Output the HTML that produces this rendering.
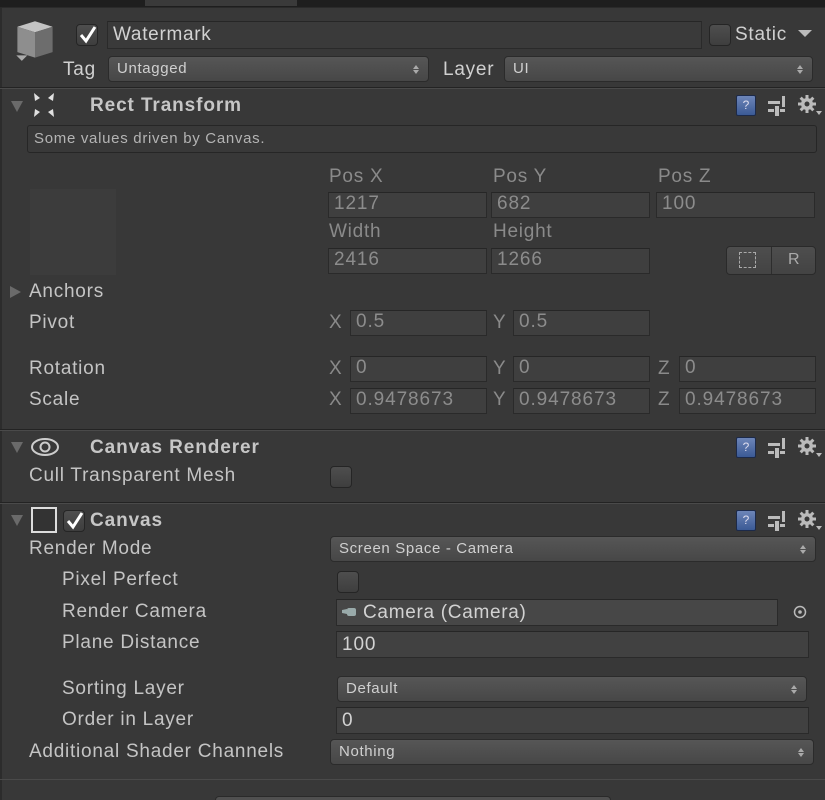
<!DOCTYPE html>
<html><head><meta charset="utf-8"><style>
*{box-sizing:border-box;margin:0;padding:0}
html,body{width:825px;height:800px;overflow:hidden}
body{background:#383838;font-family:"Liberation Sans",sans-serif;color:#c4c4c4;position:relative;font-size:19px}
.a{position:absolute}
.t{position:absolute;line-height:20px;white-space:nowrap;letter-spacing:0.75px}
.f{position:absolute;background:#3f3f3f;border:1px solid #2a2a2a;border-top-color:#262626;color:#8c8c8c;font-size:19px;line-height:22px;padding-left:5px;letter-spacing:0.9px;white-space:nowrap;overflow:hidden}
.fe{color:#d2d2d2;background:#414141}
.dd{position:absolute;background:linear-gradient(#565656,#474747);border:1px solid #2b2b2b;border-radius:4px;color:#d0d0d0;font-size:15px;line-height:24px;padding-left:8px;letter-spacing:0.65px}
.dd:after{content:"";position:absolute;right:9px;top:8px;width:0;height:0;border-left:3px solid transparent;border-right:3px solid transparent;border-bottom:4px solid #aaa}
.dd:before{content:"";position:absolute;right:9px;top:13px;width:0;height:0;border-left:3px solid transparent;border-right:3px solid transparent;border-top:4px solid #aaa}
.cb{position:absolute;width:22px;height:22px;border-radius:4px;background:linear-gradient(#4e4e4e,#3e3e3e);border:1px solid #252525}
.sep{position:absolute;left:0;width:825px;height:2px;background:#232323;border-bottom:1px solid #4a4a4a}
.h{position:absolute;font-weight:bold;font-size:19px;color:#c6c6c6;line-height:22px;letter-spacing:0.9px}
.tri{position:absolute;width:0;height:0;border-left:6px solid transparent;border-right:6px solid transparent;border-top:11px solid #6a6a6a}
.trr{position:absolute;width:0;height:0;border-top:6px solid transparent;border-bottom:6px solid transparent;border-left:11px solid #6a6a6a}
.lb{color:#8a8a8a}
</style></head><body>
<div class="a" style="left:0;top:0;width:825px;height:7px;background:#1e1e1e"></div>
<div class="a" style="left:145px;top:0;width:152px;height:6px;background:#3a3a3a"></div>
<div class="a" style="left:0;top:7px;width:825px;height:1px;background:#2a2a2a"></div>
<div class="a" style="left:0;top:8px;width:2px;height:792px;background:#2c2c2c"></div>

<svg class="a" style="left:13px;top:18px" width="44" height="44" viewBox="0 0 40 40">
<polygon points="4,8 20,3 36,8 20,13" fill="#c4c4c4"/>
<polygon points="4,8 20,13 20,36 4,31" fill="#8e8e8e"/>
<polygon points="20,13 36,8 36,31 20,36" fill="#6d6d6d"/>
<polygon points="3,34 13,34 8,39" fill="#aaa"/>
</svg>
<div class="cb" style="left:76px;top:24px"></div>
<svg class="a" style="left:78px;top:24px" width="20" height="20"><path d="M3 11 L8 17 L17 3" stroke="#fff" stroke-width="3" fill="none"/></svg>
<div class="f fe" style="left:107px;top:21px;width:595px;height:28px;font-size:19px;line-height:26px;background:#3a3a3a;letter-spacing:0.7px">Watermark</div>
<div class="cb" style="left:709px;top:24px"></div>
<div class="t" style="left:735px;top:25px;font-size:19px;color:#d0d0d0">Static</div>
<div class="a" style="left:798px;top:30px;border-left:7px solid transparent;border-right:7px solid transparent;border-top:7px solid #bbb"></div>

<div class="t" style="left:63px;top:60px;color:#d0d0d0">Tag</div>
<div class="dd" style="left:108px;top:56px;width:321px;height:26px">Untagged</div>
<div class="t" style="left:443px;top:60px;color:#d0d0d0">Layer</div>
<div class="dd" style="left:504px;top:56px;width:309px;height:26px">UI</div>

<div class="sep" style="top:87px"></div>
<div class="tri" style="left:11px;top:101px"></div>
<svg class="a" style="left:30px;top:92px" width="28" height="26" viewBox="0 0 28 26"><g fill="#e0e0e0"><polygon points="4,1 10,6 5,9"/><polygon points="24,1 18,6 23,9"/><polygon points="4,25 10,20 5,17"/><polygon points="24,25 18,20 23,17"/></g></svg>
<div class="h" style="left:90px;top:95px">Rect Transform</div>
<div class="a" style="left:736px;top:95px;width:20px;height:21px;background:linear-gradient(#6d85b8,#3b5a95);border:1px solid #1c2a4a;border-radius:2px;color:#dde;font-size:12px;text-align:center;line-height:19px">?</div>
<svg class="a" style="left:767px;top:95px" width="20" height="22"><g fill="#bbb"><rect x="1" y="6" width="12" height="3"/><rect x="15" y="1" width="3" height="11"/><rect x="1" y="14" width="6" height="3"/><rect x="8" y="11" width="4" height="10"/><rect x="13" y="14" width="5" height="3"/></g></svg>
<svg class="a" style="left:797px;top:94px" width="26" height="24"><g fill="#bbb"><circle cx="10" cy="10" r="6"/><rect x="8.5" y="1" width="3" height="18"/><rect x="1" y="8.5" width="18" height="3"/><rect x="8.5" y="1" width="3" height="18" transform="rotate(45 10 10)"/><rect x="8.5" y="1" width="3" height="18" transform="rotate(-45 10 10)"/></g><circle cx="10" cy="10" r="2.5" fill="#383838"/><polygon points="19,17 25,17 22,21" fill="#bbb"/></svg>
<div class="a" style="left:27px;top:125px;width:790px;height:28px;background:#393939;border:1px solid #262626;border-radius:3px;font-size:15px;line-height:26px;padding-left:6px;color:#b4b4b4;letter-spacing:0.7px">Some values driven by Canvas.</div>

<div class="a" style="left:30px;top:189px;width:86px;height:86px;background:#3c3c3c"></div>
<div class="t lb" style="left:329px;top:167px">Pos X</div>
<div class="t lb" style="left:493px;top:167px">Pos Y</div>
<div class="t lb" style="left:658px;top:167px">Pos Z</div>
<div class="f" style="left:328px;top:192px;width:159px;height:26px">1217</div>
<div class="f" style="left:491px;top:192px;width:159px;height:26px">682</div>
<div class="f" style="left:656px;top:192px;width:159px;height:26px">100</div>
<div class="t lb" style="left:329px;top:222px">Width</div>
<div class="t lb" style="left:493px;top:222px">Height</div>
<div class="f" style="left:328px;top:248px;width:159px;height:26px">2416</div>
<div class="f" style="left:491px;top:248px;width:159px;height:26px">1266</div>
<div class="a" style="left:726px;top:246px;width:90px;height:29px;border:1px solid #2a2a2a;border-radius:4px;background:linear-gradient(#4e4e4e,#434343)"></div>
<div class="a" style="left:771px;top:247px;width:1px;height:27px;background:#2d2d2d"></div>
<div class="a" style="left:739px;top:252px;width:17px;height:16px;border:1px dashed #aaa"></div>
<div class="t" style="left:788px;top:250px;font-size:16px;color:#aaa">R</div>

<div class="trr" style="left:10px;top:286px"></div>
<div class="t" style="left:29px;top:282px">Anchors</div>
<div class="t" style="left:29px;top:313px">Pivot</div>
<div class="t lb" style="left:329px;top:313px">X</div>
<div class="f" style="left:350px;top:310px;width:137px;height:26px">0.5</div>
<div class="t lb" style="left:493px;top:313px">Y</div>
<div class="f" style="left:513px;top:310px;width:137px;height:26px">0.5</div>

<div class="t" style="left:29px;top:359px">Rotation</div>
<div class="t lb" style="left:329px;top:359px">X</div>
<div class="f" style="left:350px;top:356px;width:137px;height:26px">0</div>
<div class="t lb" style="left:493px;top:359px">Y</div>
<div class="f" style="left:513px;top:356px;width:137px;height:26px">0</div>
<div class="t lb" style="left:658px;top:359px">Z</div>
<div class="f" style="left:679px;top:356px;width:137px;height:26px">0</div>

<div class="t" style="left:29px;top:390px">Scale</div>
<div class="t lb" style="left:329px;top:390px">X</div>
<div class="f" style="left:350px;top:388px;width:137px;height:26px">0.9478673</div>
<div class="t lb" style="left:493px;top:390px">Y</div>
<div class="f" style="left:513px;top:388px;width:137px;height:26px">0.9478673</div>
<div class="t lb" style="left:658px;top:390px">Z</div>
<div class="f" style="left:679px;top:388px;width:137px;height:26px">0.9478673</div>

<div class="sep" style="top:429px"></div>
<div class="tri" style="left:11px;top:442px"></div>
<svg class="a" style="left:29px;top:436px" width="32" height="22"><ellipse cx="16" cy="11" rx="13" ry="8" fill="none" stroke="#ccc" stroke-width="2"/><circle cx="16" cy="11" r="4.5" fill="none" stroke="#ccc" stroke-width="2"/></svg>
<div class="h" style="left:90px;top:437px">Canvas Renderer</div>
<div class="a" style="left:736px;top:437px;width:20px;height:21px;background:linear-gradient(#6d85b8,#3b5a95);border:1px solid #1c2a4a;border-radius:2px;color:#dde;font-size:12px;text-align:center;line-height:19px">?</div>
<svg class="a" style="left:767px;top:437px" width="20" height="22"><g fill="#bbb"><rect x="1" y="6" width="12" height="3"/><rect x="15" y="1" width="3" height="11"/><rect x="1" y="14" width="6" height="3"/><rect x="8" y="11" width="4" height="10"/><rect x="13" y="14" width="5" height="3"/></g></svg>
<svg class="a" style="left:797px;top:436px" width="26" height="24"><g fill="#bbb"><circle cx="10" cy="10" r="6"/><rect x="8.5" y="1" width="3" height="18"/><rect x="1" y="8.5" width="18" height="3"/><rect x="8.5" y="1" width="3" height="18" transform="rotate(45 10 10)"/><rect x="8.5" y="1" width="3" height="18" transform="rotate(-45 10 10)"/></g><circle cx="10" cy="10" r="2.5" fill="#383838"/><polygon points="19,17 25,17 22,21" fill="#bbb"/></svg>
<div class="t" style="left:29px;top:466px">Cull Transparent Mesh</div>
<div class="cb" style="left:330px;top:466px"></div>

<div class="sep" style="top:502px"></div>
<div class="tri" style="left:11px;top:515px"></div>
<div class="a" style="left:31px;top:507px;width:26px;height:26px;border:2px solid #ddd;background:#333"></div>
<div class="cb" style="left:63px;top:510px"></div>
<svg class="a" style="left:65px;top:510px" width="20" height="20"><path d="M3 11 L8 17 L17 3" stroke="#fff" stroke-width="3" fill="none"/></svg>
<div class="h" style="left:90px;top:510px">Canvas</div>
<div class="a" style="left:736px;top:510px;width:20px;height:21px;background:linear-gradient(#6d85b8,#3b5a95);border:1px solid #1c2a4a;border-radius:2px;color:#dde;font-size:12px;text-align:center;line-height:19px">?</div>
<svg class="a" style="left:767px;top:510px" width="20" height="22"><g fill="#bbb"><rect x="1" y="6" width="12" height="3"/><rect x="15" y="1" width="3" height="11"/><rect x="1" y="14" width="6" height="3"/><rect x="8" y="11" width="4" height="10"/><rect x="13" y="14" width="5" height="3"/></g></svg>
<svg class="a" style="left:797px;top:509px" width="26" height="24"><g fill="#bbb"><circle cx="10" cy="10" r="6"/><rect x="8.5" y="1" width="3" height="18"/><rect x="1" y="8.5" width="18" height="3"/><rect x="8.5" y="1" width="3" height="18" transform="rotate(45 10 10)"/><rect x="8.5" y="1" width="3" height="18" transform="rotate(-45 10 10)"/></g><circle cx="10" cy="10" r="2.5" fill="#383838"/><polygon points="19,17 25,17 22,21" fill="#bbb"/></svg>

<div class="t" style="left:29px;top:539px">Render Mode</div>
<div class="dd" style="left:330px;top:536px;width:486px;height:26px">Screen Space - Camera</div>
<div class="t" style="left:62px;top:570px">Pixel Perfect</div>
<div class="cb" style="left:337px;top:571px"></div>
<div class="t" style="left:62px;top:602px">Render Camera</div>
<div class="f fe" style="left:336px;top:599px;width:442px;height:27px;padding-left:26px;font-size:19px;line-height:25px;background:#474747;letter-spacing:0.7px">Camera (Camera)</div>
<svg class="a" style="left:341px;top:605px" width="20" height="14"><rect x="6" y="3" width="9" height="8" rx="2" fill="#9aa"/><polygon points="1,5 6,4 6,9 1,8" fill="#9aa"/></svg>
<svg class="a" style="left:792px;top:604px" width="16" height="16"><circle cx="8" cy="8" r="5.5" fill="none" stroke="#bbb" stroke-width="1.5"/><circle cx="8" cy="8" r="1.8" fill="#bbb"/></svg>
<div class="t" style="left:62px;top:633px">Plane Distance</div>
<div class="f fe" style="left:336px;top:631px;width:473px;height:27px;font-size:19px;line-height:25px">100</div>
<div class="t" style="left:62px;top:679px">Sorting Layer</div>
<div class="dd" style="left:337px;top:676px;width:470px;height:26px">Default</div>
<div class="t" style="left:62px;top:710px">Order in Layer</div>
<div class="f fe" style="left:336px;top:707px;width:473px;height:27px;font-size:19px;line-height:25px">0</div>
<div class="t" style="left:29px;top:742px">Additional Shader Channels</div>
<div class="dd" style="left:330px;top:739px;width:484px;height:26px">Nothing</div>
<div class="a" style="left:0;top:779px;width:825px;height:1px;background:#4a4a4a"></div>
<div class="a" style="left:215px;top:796px;width:396px;height:4px;border:1px solid #2a2a2a;border-bottom:none;border-radius:4px 4px 0 0;background:#505050"></div>
</body></html>
